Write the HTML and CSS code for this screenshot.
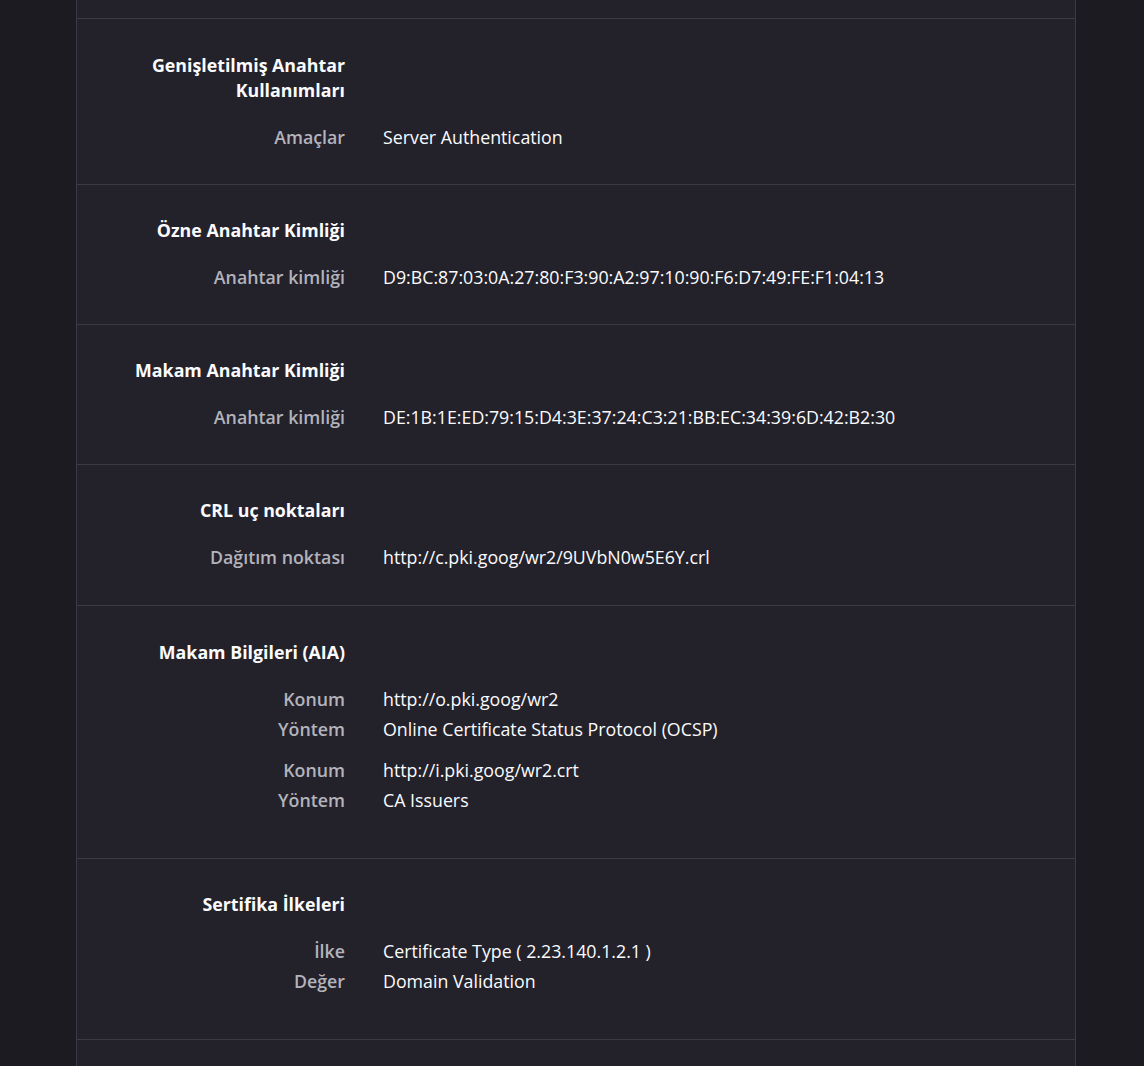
FILE: index.html
```html
<!DOCTYPE html>
<html lang="tr">
<head>
<meta charset="utf-8">
<link rel="stylesheet" href="styles.css">
</head>
<body>
<div class="panel">
  <div class="top-stub"></div>

  <section class="info-group tall">
    <div class="title">Genişletilmiş Anahtar Kullanımları</div><div></div>
    <div class="label">Amaçlar</div><div class="value">Server Authentication</div>
  </section>

  <section class="info-group">
    <div class="title">Özne Anahtar Kimliği</div><div></div>
    <div class="label">Anahtar kimliği</div><div class="value">D9:BC:87:03:0A:27:80:F3:90:A2:97:10:90:F6:D7:49:FE:F1:04:13</div>
  </section>

  <section class="info-group">
    <div class="title">Makam Anahtar Kimliği</div><div></div>
    <div class="label">Anahtar kimliği</div><div class="value">DE:1B:1E:ED:79:15:D4:3E:37:24:C3:21:BB:EC:34:39:6D:42:B2:30</div>
  </section>

  <section class="info-group tall-bottom">
    <div class="title">CRL uç noktaları</div><div></div>
    <div class="label">Dağıtım noktası</div><div class="value">http://c.pki.goog/wr2/9UVbN0w5E6Y.crl</div>
  </section>

  <section class="info-group tall">
    <div class="title">Makam Bilgileri (AIA)</div><div></div>
    <div class="label">Konum</div><div class="value">http://o.pki.goog/wr2</div>
    <div class="label">Yöntem</div><div class="value">Online Certificate Status Protocol (OCSP)</div>
    <div class="spacer"></div>
    <div class="label">Konum</div><div class="value">http://i.pki.goog/wr2.crt</div>
    <div class="label">Yöntem</div><div class="value">CA Issuers</div>
    <div class="spacer"></div>
  </section>

  <section class="info-group">
    <div class="title">Sertifika İlkeleri</div><div></div>
    <div class="label">İlke</div><div class="value">Certificate Type ( 2.23.140.1.2.1 )</div>
    <div class="label">Değer</div><div class="value">Domain Validation</div>
    <div class="spacer"></div>
  </section>

  <div class="bottom-stub"></div>
</div>
</body>
</html>
```
FILE: styles.css
```css
html, body {
  margin: 0;
  padding: 0;
  background: #1c1b22;
  height: 100%;
  overflow: hidden;
}
body {
  font-family: "Open Sans", "Noto Sans", sans-serif;
  font-size: 17.8px;
  color: #fbfbfe;
}
.panel {
  width: 998px;
  margin-left: 76px;
  background: #23222b;
  border-left: 1px solid #3a3944;
  border-right: 1px solid #3a3944;
  min-height: 1066px;
}
.top-stub {
  height: 18px;
  border-bottom: 1px solid #3a3944;
}
.info-group {
  display: grid;
  grid-template-columns: 268px 1fr;
  column-gap: 38px;
  row-gap: 5px;
  padding: 33px 0 34px;
  border-bottom: 1px solid #3a3944;
  line-height: 25px;
}
.info-group.tall {
  padding-top: 34px;
}
.info-group.tall-bottom {
  padding-bottom: 35px;
}
.title {
  grid-column: 1;
  text-align: right;
  font-weight: 700;
  margin-bottom: 17px;
  padding-left: 40px;
}
.label {
  text-align: right;
  color: #b3b3bc;
  font-weight: 600;
}
.value {
  white-space: nowrap;
}
.spacer {
  grid-column: 1 / -1;
  height: 6px;
}
.bottom-stub {
  height: 30px;
}
```
